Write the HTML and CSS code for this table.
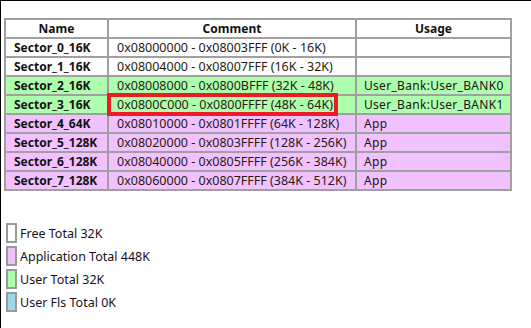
FILE: index.html
```html
<!DOCTYPE html>
<html>
<head>
<meta charset="utf-8">
<link rel="stylesheet" href="styles.css">
</head>
<body>
<div class="page">
  <div class="table-wrap">
    <table class="sectors">
      <thead>
        <tr><th class="c-name">Name</th><th class="c-comment">Comment</th><th class="c-usage">Usage</th></tr>
      </thead>
      <tbody>
        <tr class="free"><td class="name">Sector_0_16K</td><td class="comment">0x08000000 - 0x08003FFF (0K - 16K)</td><td class="usage"></td></tr>
        <tr class="free"><td class="name">Sector_1_16K</td><td class="comment">0x08004000 - 0x08007FFF (16K - 32K)</td><td class="usage"></td></tr>
        <tr class="user"><td class="name">Sector_2_16K</td><td class="comment">0x08008000 - 0x0800BFFF (32K - 48K)</td><td class="usage">User_Bank:User_BANK0</td></tr>
        <tr class="user"><td class="name">Sector_3_16K</td><td class="comment">0x0800C000 - 0x0800FFFF (48K - 64K)</td><td class="usage">User_Bank:User_BANK1</td></tr>
        <tr class="app"><td class="name">Sector_4_64K</td><td class="comment">0x08010000 - 0x0801FFFF (64K - 128K)</td><td class="usage">App</td></tr>
        <tr class="app"><td class="name">Sector_5_128K</td><td class="comment">0x08020000 - 0x0803FFFF (128K - 256K)</td><td class="usage">App</td></tr>
        <tr class="app"><td class="name">Sector_6_128K</td><td class="comment">0x08040000 - 0x0805FFFF (256K - 384K)</td><td class="usage">App</td></tr>
        <tr class="app"><td class="name">Sector_7_128K</td><td class="comment">0x08060000 - 0x0807FFFF (384K - 512K)</td><td class="usage">App</td></tr>
      </tbody>
    </table>
    <div class="highlight"></div>
  </div>
  <ul class="legend">
    <li><span class="swatch sw-free"></span>Free Total 32K</li>
    <li><span class="swatch sw-app"></span>Application Total 448K</li>
    <li><span class="swatch sw-user"></span>User Total 32K</li>
    <li><span class="swatch sw-fls"></span>User Fls Total 0K</li>
  </ul>
</div>
</body>
</html>
```
FILE: styles.css
```css
html, body {
  margin: 0;
  padding: 0;
  background: #fff;
}
body {
  font-family: "Noto Sans", "Liberation Sans", sans-serif;
  font-size: 12px;
  color: #1a1414;
}
.page {
  box-sizing: border-box;
  height: 328px;
  border-top: 1px solid #000;
  border-left: 1px solid #000;
  padding: 17px 0 0 3px;
}
.table-wrap {
  position: relative;
  width: 506px;
}
.sectors {
  border-collapse: separate;
  border-spacing: 0;
  border-top: 2px solid #a0a0a0;
  border-left: 2px solid #a0a0a0;
  width: 506px;
  table-layout: fixed;
}
.sectors th, .sectors td {
  border-right: 2px solid #a0a0a0;
  border-bottom: 2px solid #a0a0a0;
  height: 17px;
  padding: 0 0 0 8px;
  line-height: 17px;
  white-space: nowrap;
  overflow: hidden;
}
.sectors th {
  font-weight: bold;
  text-align: center;
  padding: 0;
  color: #111;
}
.c-name { width: 101px; }
.c-comment { width: 246px; }
.c-usage { width: 153px; }
.sectors td.name {
  font-weight: bold;
  color: #111;
  padding-left: 8px;
}
.sectors td.comment {
  font-size: 12.5px;
  color: #2a1a10;
}
.sectors td.usage {
  font-size: 12px;
  letter-spacing: 0.3px;
  padding-left: 7px;
}
.free td { background: #ffffff; }
.user td { background: #adffad; }
.app td { background: #f1c2ff; }
.highlight {
  position: absolute;
  left: 103px;
  top: 75px;
  width: 223px;
  height: 15px;
  border: 4px solid #ec1c24;
}
.legend {
  list-style: none;
  margin: 32px 0 0 0;
  padding: 0 0 0 2px;
  display: flex;
  flex-direction: column;
  gap: 3px;
}
.legend li {
  display: flex;
  align-items: center;
  height: 20px;
  font-size: 12.5px;
  color: #1a1020;
}
.swatch {
  box-sizing: border-box;
  width: 11px;
  height: 20px;
  border: 2px solid #9a9a9a;
  margin-right: 3px;
}
.sw-free { background: #ffffff; }
.sw-app { background: #f1c2ff; }
.sw-user { background: #adffad; }
.sw-fls { background: #9dd8e8; }
```
